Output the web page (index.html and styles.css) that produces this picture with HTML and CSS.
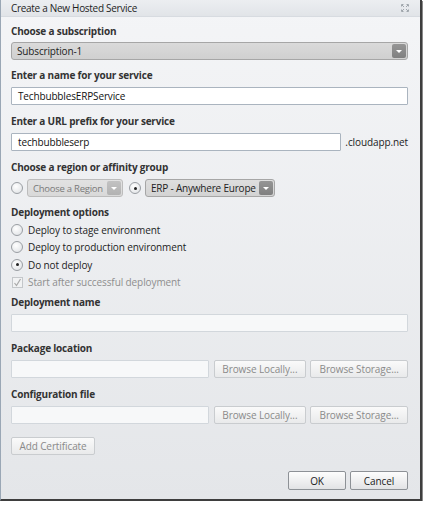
FILE: index.html
```html
<!DOCTYPE html>
<html>
<head>
<meta charset="utf-8">
<link rel="stylesheet" href="styles.css">
</head>
<body>
<div class="window">
  <div class="titlebar">
    <span class="title">Create a New Hosted Service</span>
    <svg class="resize" width="8" height="8" viewBox="0 0 8 8">
      <g fill="none" stroke="#a0a6ac" stroke-width="1">
        <path d="M0.5 2.5V0.5H2.5M5.5 0.5H7.5V2.5M7.5 5.5V7.5H5.5M2.5 7.5H0.5V5.5"/>
        <path d="M1 1L3 3M7 1L5 3M7 7L5 5M1 7L3 5"/>
      </g>
    </svg>
  </div>
  <div class="content">
    <div class="field f1">
      <div class="label">Choose a subscription</div>
      <div class="select sub"><span class="sel-text">Subscription-1</span><span class="arrow"><i></i></span></div>
    </div>
    <div class="field">
      <div class="label">Enter a name for your service</div>
      <div class="input">TechbubblesERPService</div>
    </div>
    <div class="field">
      <div class="label">Enter a URL prefix for your service</div>
      <div class="row">
        <div class="input url">techbubbleserp</div>
        <span class="suffix">.cloudapp.net</span>
      </div>
    </div>
    <div class="field f4">
      <div class="label">Choose a region or affinity group</div>
      <div class="row">
        <span class="radio"></span>
        <div class="select region disabled"><span class="sel-text">Choose a Region</span><span class="arrow"><i></i></span></div>
        <span class="radio on"></span>
        <div class="select affinity"><span class="sel-text">ERP - Anywhere Europe</span><span class="arrow"><i></i></span></div>
      </div>
    </div>
    <div class="field f5">
      <div class="label lbl5">Deployment options</div>
      <div class="opt"><span class="radio"></span>Deploy to stage environment</div>
      <div class="opt"><span class="radio"></span>Deploy to production environment</div>
      <div class="opt"><span class="radio on"></span>Do not deploy</div>
      <div class="opt dim"><span class="check"><svg width="9" height="9" viewBox="0 0 9 9"><path d="M1.5 5L3.5 7.5L7.5 1" fill="none" stroke="#a8a8a8" stroke-width="1.2"/></svg></span>Start after successful deployment</div>
    </div>
    <div class="field">
      <div class="label">Deployment name</div>
      <div class="input off"></div>
    </div>
    <div class="field">
      <div class="label">Package location</div>
      <div class="row">
        <div class="input off short"></div>
        <span class="btn browse1">Browse Locally...</span>
        <span class="btn browse2">Browse Storage...</span>
      </div>
    </div>
    <div class="field f8">
      <div class="label">Configuration file</div>
      <div class="row">
        <div class="input off short"></div>
        <span class="btn browse1">Browse Locally...</span>
        <span class="btn browse2">Browse Storage...</span>
      </div>
    </div>
    <div class="certrow"><span class="btn cert">Add Certificate</span></div>
    <div class="actions">
      <span class="btn act">OK</span>
      <span class="btn act">Cancel</span>
    </div>
  </div>
</div>
</body>
</html>
```
FILE: styles.css
```css
html, body {
  margin: 0;
  padding: 0;
  background: #ffffff;
}
body {
  font-family: "Open Sans", "DejaVu Sans", sans-serif;
  font-size: 10px;
  color: #222;
}
.window {
  width: 419px;
  height: 499px;
  border-left: 1px solid #9aa7b5;
  border-right: 2px solid #3e3e3e;
  border-bottom: 2px solid #3e3e3e;
  box-shadow: 1px 1px 0 #8a8a8a;
  background: linear-gradient(#f4f5f7, #e4e6e9);
  display: flex;
  flex-direction: column;
}
.titlebar {
  height: 16px;
  border-bottom: 1px solid #d7dbe0;
  background: linear-gradient(#eceef1, #e1e4e8);
  display: flex;
  align-items: center;
  justify-content: space-between;
  padding: 0 11px 0 10px;
}
.title {
  font-size: 10px;
  color: #1e1e1e;
  letter-spacing: -0.3px;
}
.resize { display: block; }
.content {
  padding: 7px 12px 0 10px;
  display: flex;
  flex-direction: column;
}
.field { margin-bottom: 9px; }
.f1 { margin-bottom: 8px; }
.f4 { margin-bottom: 8px; }
.f5 { margin-bottom: 4px; }
.f8 { margin-bottom: 13px; }
.label {
  height: 14px;
  line-height: 14px;
  font-weight: bold;
  color: #333;
  margin-bottom: 5px;
  letter-spacing: -0.2px;
}
.f1 .label { margin-bottom: 4px; }
.lbl5 { margin-bottom: 2px; }
.row {
  display: flex;
  align-items: center;
}
.input {
  box-sizing: border-box;
  height: 18px;
  width: 397px;
  background: #fff;
  border: 1px solid #aab4bf;
  border-radius: 1px;
  padding-left: 6px;
  line-height: 16px;
  color: #111;
  letter-spacing: -0.15px;
}
.input.url { width: 336px; }
.input.off {
  background: #f7f8f9;
  border-color: #d2d7dc;
}
.input.short { width: 198px; }
.suffix {
  margin-left: 4px;
  color: #222;
  letter-spacing: -0.1px;
}
.select {
  box-sizing: border-box;
  height: 18px;
  border: 1px solid #a6a6a6;
  border-radius: 3px;
  background: linear-gradient(#dadada, #d0d0d0);
  display: flex;
  align-items: center;
  justify-content: space-between;
  padding-left: 5px;
  padding-right: 1px;
  color: #222;
  letter-spacing: -0.15px;
  white-space: nowrap;
  overflow: hidden;
}
.sel-text {
  overflow: hidden;
  white-space: nowrap;
}
.select.sub { width: 397px; }
.select.region {
  width: 96px;
  margin-left: 4px;
  background: linear-gradient(#e2e2e2, #d9d9d9);
  border-color: #bcbcbc;
  color: #7a7a7a;
  font-size: 9.5px;
  letter-spacing: -0.25px;
}
.select.affinity {
  width: 130px;
  margin-left: 4px;
  background: linear-gradient(#dedede, #d3d3d3);
  letter-spacing: -0.2px;
}
.arrow {
  width: 14px;
  height: 14px;
  flex: none;
  border-radius: 2px;
  background: linear-gradient(#959595, #808080);
  display: flex;
  align-items: center;
  justify-content: center;
}
.select.region .arrow { background: linear-gradient(#c2c2c2, #b2b2b2); }
.arrow i {
  width: 0;
  height: 0;
  border-left: 3px solid transparent;
  border-right: 3px solid transparent;
  border-top: 3px solid #fff;
}
.radio {
  box-sizing: border-box;
  width: 12px;
  height: 12px;
  border-radius: 50%;
  border: 1px solid #9a9ea3;
  background: radial-gradient(circle at 40% 35%, #ffffff, #dcdfe2);
  display: inline-flex;
  align-items: center;
  justify-content: center;
  flex: none;
}
.row .radio.on { margin-left: 6px; }
.radio.on::after {
  content: "";
  width: 3px;
  height: 3px;
  border-radius: 50%;
  background: #222;
}
.opt {
  height: 17.5px;
  display: flex;
  align-items: center;
  color: #222;
  letter-spacing: -0.1px;
}
.opt .radio { margin-right: 5px; }
.opt.dim { color: #8e8e8e; }
.check {
  box-sizing: border-box;
  width: 11px;
  height: 11px;
  border: 1px solid #c4c7ca;
  background: #f1f2f3;
  margin: 0 5px 0 1px;
  display: inline-flex;
  align-items: center;
  justify-content: center;
}
.check svg { display: block; }
.btn {
  box-sizing: border-box;
  height: 18px;
  border: 1px solid #c9cccf;
  border-radius: 2px;
  background: linear-gradient(#fafafa, #e9eaeb);
  color: #8a8a8a;
  display: inline-flex;
  align-items: center;
  justify-content: center;
  letter-spacing: -0.1px;
  white-space: nowrap;
}
.browse1 { width: 93px; margin-left: 5px; }
.browse2 { width: 98px; margin-left: 4px; }
.certrow { display: flex; }
.cert { width: 84px; }
.actions {
  display: flex;
  justify-content: flex-end;
  gap: 4px;
  margin-top: 16px;
}
.act {
  width: 58px;
  height: 19px;
  border-color: #8d9196;
  color: #1a1a1a;
  background: linear-gradient(#fdfdfd, #e2e3e5);
}
```
